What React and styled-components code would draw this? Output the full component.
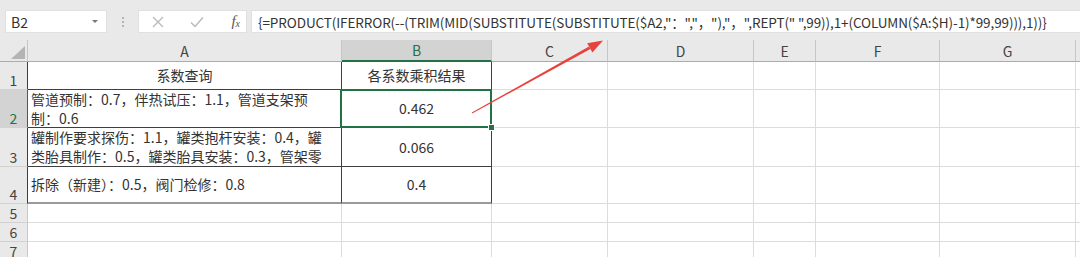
import React from "react";
import styled, { createGlobalStyle } from "styled-components";

const GlobalStyle = createGlobalStyle`
  html, body {
    margin: 0;
    padding: 0;
    background: #ffffff;
    overflow: hidden;
  }
  body {
    font-family: "Noto Sans CJK SC", "Liberation Sans", sans-serif;
    color: #333;
  }
`;

const FONT = `"Noto Sans CJK SC", "Liberation Sans", sans-serif`;
const GREEN = "#217346";

const columns = ["A", "B", "C", "D", "E", "F", "G", ""];

const rows = [
  {
    n: 1,
    a: ["系数查询"],
    aAlign: "center",
    b: "各系数乘积结果",
  },
  {
    n: 2,
    a: ["管道预制：0.7，伴热试压：1.1，管道支架预", "制：0.6"],
    b: "0.462",
    selected: true,
  },
  {
    n: 3,
    a: [
      "罐制作要求探伤：1.1，罐类抱杆安装：0.4，罐",
      "类胎具制作：0.5，罐类胎具安装：0.3，管架零",
    ],
    b: "0.066",
  },
  {
    n: 4,
    a: ["拆除（新建）：0.5，阀门检修：0.8"],
    b: "0.4",
    last: true,
  },
  { n: 5 },
  { n: 6 },
  { n: 7 },
];

const formula =
  '{=PRODUCT(IFERROR(--(TRIM(MID(SUBSTITUTE(SUBSTITUTE($A2,"：","，"),"，",REPT(" ",99)),1+(COLUMN($A:$H)-1)*99,99))),1))}';

function App() {
  return (
    <Page>
      <GlobalStyle />
      <Toolbar>
        <NameBox>
          <span>B2</span>
          <Caret />
        </NameBox>
        <Grip>
          <i />
          <i />
          <i />
        </Grip>
        <ActionBox>
          <ToolIcon>
            <svg width="12" height="12" viewBox="0 0 12 12">
              <path d="M1 1 L11 11 M11 1 L1 11" stroke="#b9b9b9" strokeWidth="1.3" fill="none" />
            </svg>
          </ToolIcon>
          <ToolIcon>
            <svg width="14" height="12" viewBox="0 0 14 12">
              <path d="M1 6.5 L5 10.5 L13 1.5" stroke="#b9b9b9" strokeWidth="1.4" fill="none" />
            </svg>
          </ToolIcon>
          <Fx>
            f<sub>x</sub>
          </Fx>
        </ActionBox>
        <FormulaBox>{formula}</FormulaBox>
      </Toolbar>

      <Sheet>
        <Corner>
          <svg width="14" height="13" viewBox="0 0 14 13">
            <polygon points="14,0 14,13 0,13" fill="#b4b4b4" />
          </svg>
        </Corner>
        {columns.map((c) => (
          <ColHead key={c || "end"} $active={c === "B"}>
            {c}
          </ColHead>
        ))}

        {rows.map((r) => {
          const boxed = !!r.a;
          return (
            <React.Fragment key={r.n}>
              <RowHead $active={r.selected} $edge={boxed}>
                {r.n}
              </RowHead>
              <Cell $boxed={boxed} $last={r.last} $align={r.aAlign || "left"}>
                {r.a && (
                  <Lines>
                    {r.a.map((line) => (
                      <div key={line}>{line}</div>
                    ))}
                  </Lines>
                )}
              </Cell>
              <Cell $boxed={boxed} $last={r.last} $selected={r.selected}>
                {r.b}
              </Cell>
              {columns.slice(2).map((c) => (
                <Cell key={c || "end"} />
              ))}
            </React.Fragment>
          );
        })}
      </Sheet>

      <Arrow width="1080" height="257" viewBox="0 0 1080 257">
        <polygon
          points="472.2,113.4 471.8,112.6 589.0,46.5 590.4,49.1"
          fill="#e8423c"
        />
        <polygon points="603,40.5 592.4,52.6 587.2,43.2" fill="#e8423c" />
      </Arrow>
    </Page>
  );
}

export default App;

const Page = styled.div`
  position: relative;
  width: 1080px;
  height: 257px;
  overflow: hidden;
  background: #fff;
`;

const Toolbar = styled.div`
  height: 40px;
  box-sizing: border-box;
  padding: 10px 0 7px 5px;
  background: #e9e9e9;
  display: flex;
  align-items: stretch;
`;

const NameBox = styled.div`
  width: 102px;
  background: #fff;
  border: 1px solid #e0e0e0;
  box-sizing: border-box;
  display: flex;
  align-items: center;
  justify-content: space-between;
  padding: 0 8px 0 5px;
  font-family: ${FONT};
  font-size: 14px;
  color: #333;
`;

const Caret = styled.span`
  width: 0;
  height: 0;
  border-left: 3px solid transparent;
  border-right: 3px solid transparent;
  border-top: 3px solid #777;
`;

const Grip = styled.div`
  width: 31px;
  display: flex;
  flex-direction: column;
  align-items: center;
  justify-content: center;
  gap: 2px;
  i {
    display: block;
    width: 2px;
    height: 2px;
    background: #b5b5b5;
  }
`;

const ActionBox = styled.div`
  width: 109px;
  background: #fff;
  border: 1px solid #e0e0e0;
  box-sizing: border-box;
  display: flex;
  align-items: center;
  padding: 0 6px 0 13px;
`;

const ToolIcon = styled.span`
  width: 38px;
  display: flex;
  align-items: center;
`;

const Fx = styled.span`
  margin-left: auto;
  font-family: "Liberation Serif", serif;
  font-style: italic;
  font-size: 15px;
  color: #555;
  sub {
    font-size: 10px;
    vertical-align: -1px;
  }
`;

const FormulaBox = styled.div`
  flex: 1;
  margin-left: 4px;
  background: #fff;
  border: 1px solid #e0e0e0;
  border-right: none;
  box-sizing: border-box;
  display: flex;
  align-items: center;
  padding-left: 6px;
  font-family: ${FONT};
  font-size: 13.5px;
  letter-spacing: -0.1px;
  color: #333;
  white-space: pre;
  overflow: hidden;
`;

const Sheet = styled.div`
  display: grid;
  grid-template-columns: 28px 314px 150px 116px 146px 62px 124px 136px 1fr;
  grid-template-rows: 22px 28px 38px 39px 37px 19px 19px 19px;
  font-family: ${FONT};
  font-size: 14px;
  color: #333;
  & > * {
    box-sizing: border-box;
    min-width: 0;
  }
`;

const Corner = styled.div`
  background: #e9e9e9;
  border-right: 1px solid #c6c6c6;
  border-bottom: 1px solid #ababab;
  display: flex;
  align-items: flex-end;
  justify-content: flex-end;
  padding: 0 2px 2px 0;
`;

const ColHead = styled.div`
  background: ${(p) => (p.$active ? "#d3d3d3" : "#e9e9e9")};
  color: ${(p) => (p.$active ? GREEN : "#444")};
  border-right: 1px solid #c6c6c6;
  border-bottom: ${(p) => (p.$active ? `2px solid ${GREEN}` : "1px solid #ababab")};
  display: flex;
  align-items: center;
  justify-content: center;
  font-size: 14px;
  line-height: 1;
`;

const RowHead = styled.div`
  background: ${(p) => (p.$active ? "#d3d3d3" : "#e9e9e9")};
  color: ${(p) => (p.$active ? GREEN : "#444")};
  border-right: 1px solid
    ${(p) => (p.$active ? GREEN : p.$edge ? "#3f3f3f" : "#c6c6c6")};
  border-bottom: 1px solid #d2d2d2;
  display: flex;
  align-items: flex-end;
  justify-content: center;
  font-size: 14px;
  line-height: 18px;
`;

const Cell = styled.div`
  position: relative;
  border-right: 1px solid ${(p) => (p.$boxed ? "#3f3f3f" : "#dcdcdc")};
  border-bottom: ${(p) =>
    p.$last ? "2px solid #9a9a9a" : p.$boxed ? "1px solid #3f3f3f" : "1px solid #dcdcdc"};
  display: flex;
  align-items: center;
  justify-content: ${(p) => (p.$align === "left" ? "flex-start" : "center")};
  padding: 0 3px;
  white-space: nowrap;
  overflow: ${(p) => (p.$selected ? "visible" : "hidden")};
  line-height: 19px;
  ${(p) =>
    p.$selected &&
    `
    &::after {
      content: "";
      position: absolute;
      left: -2px;
      top: -1px;
      right: -1px;
      bottom: -1px;
      border: 2px solid ${GREEN};
      pointer-events: none;
    }
    &::before {
      content: "";
      position: absolute;
      right: -4px;
      bottom: -4px;
      width: 5px;
      height: 5px;
      background: ${GREEN};
      border: 1px solid #fff;
      z-index: 2;
    }
  `}
`;

const Lines = styled.div`
  display: flex;
  flex-direction: column;
`;

const Arrow = styled.svg`
  position: absolute;
  left: 0;
  top: 0;
  pointer-events: none;
`;
